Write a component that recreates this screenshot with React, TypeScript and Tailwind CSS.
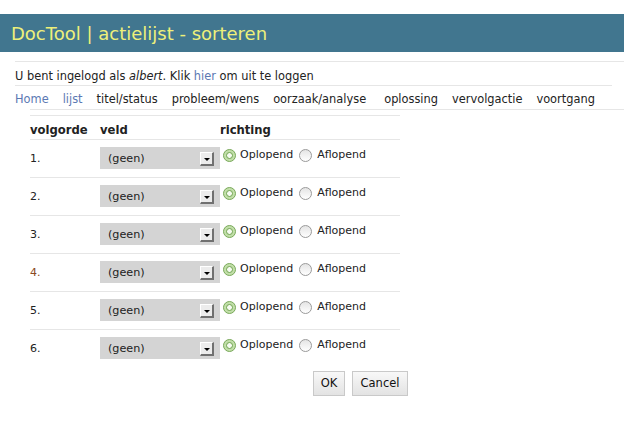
import React from "react";

const rows = [1, 2, 3, 4, 5, 6];

function Radio({ checked }: { checked: boolean }) {
  if (checked) {
    return (
      <span className="flex h-[13px] w-[13px] shrink-0 items-center justify-center rounded-full border border-[#79a95a] bg-[#c2dfa9]">
        <span className="block h-[7px] w-[7px] rounded-full border-[1.5px] border-[#6fa34e] bg-[#f6fbf2]" />
      </span>
    );
  }
  return (
    <span className="block h-[13px] w-[13px] shrink-0 rounded-full border border-[#9a9a9a] bg-gradient-to-b from-[#e4e4e4] to-white" />
  );
}

function FakeSelect() {
  return (
    <div className="relative mt-[7px] flex h-[22px] w-[120px] items-center bg-[#d4d4d4] pl-[8px] pt-[3px] text-[11.2px] text-[#222]">
      (geen)
      <div className="absolute left-[100px] top-[5px] flex h-[14px] w-[14px] items-center justify-center border-b-2 border-r-2 border-b-[#707070] border-r-[#707070] border-l border-t border-l-white border-t-white bg-[#ececec]">
        <span className="mt-[1px] h-0 w-0 border-x-[3px] border-t-[3px] border-x-transparent border-t-black" />
      </div>
    </div>
  );
}

export default function App() {
  return (
    <div className="h-[439px] w-[624px] overflow-hidden bg-white font-['DejaVu_Sans',sans-serif] text-[#222]">
      <div className="h-[14px]" />
      <div className="flex h-[38px] items-center bg-[#41768f] pl-[11px] text-[18px] text-[#eef07a]">
        DocTool | actielijst - sorteren
      </div>
      <div className="ml-[15px] mt-[9px] border-t border-[#e6e6e6]" />
      <div className="ml-[15px] mr-[12px] flex h-[24px] items-center border-b border-[#e6e6e6] pt-[6px] text-[11.4px]">
        <span>
          U bent ingelogd als <i>albert</i>. Klik{" "}
          <span className="text-[#5b79b3]">hier</span> om uit te loggen
        </span>
      </div>
      <div className="ml-[15px] flex h-[23px] items-center gap-[14px] pt-[5px] text-[11.4px]">
        <span className="text-[#5b79b3]">Home</span>
        <span className="text-[#5b79b3]">lijst</span>
        <span>titel/status</span>
        <span>probleem/wens</span>
        <span className="mr-[4px]">oorzaak/analyse</span>
        <span>oplossing</span>
        <span>vervolgactie</span>
        <span>voortgang</span>
      </div>
      <div className="ml-[30px] border-t border-[#e6e6e6]" />
      <div className="ml-[30px] mt-[5px] w-[370px] border-t border-[#e6e6e6]">
        <div className="flex h-[24px] items-center border-b border-[#e6e6e6] pt-[6px] text-[11.6px] font-bold text-[#222]">
          <span className="w-[70px]">volgorde</span>
          <span className="w-[120px]">veld</span>
          <span>richting</span>
        </div>
        {rows.map((n) => (
          <div
            key={n}
            className={`flex h-[38px] items-start text-[11px] ${n < 6 ? "border-b border-[#e6e6e6]" : ""}`}
          >
            <span className={`w-[70px] pt-[11px] ${n === 4 ? "text-[#8a4a22]" : ""}`}>{n}.</span>
            <FakeSelect />
            <div className="ml-[3px] mt-[8px] flex items-center">
              <Radio checked />
              <span className="ml-[4px] mt-[-1px]">Oplopend</span>
              <span className="ml-[6px] block">
                <Radio checked={false} />
              </span>
              <span className="ml-[5px] mt-[-1px]">Aflopend</span>
            </div>
          </div>
        ))}
      </div>
      <div className="mt-[3px] flex w-[408px] justify-end gap-[7px]">
        <button className="h-[25px] w-[32px] border border-[#c9c9c9] bg-gradient-to-b from-[#f8f8f8] to-[#e3e3e3] text-[11.5px] text-[#111]">
          OK
        </button>
        <button className="h-[25px] w-[56px] border border-[#c9c9c9] bg-gradient-to-b from-[#f8f8f8] to-[#e3e3e3] text-[11.5px] text-[#111]">
          Cancel
        </button>
      </div>
    </div>
  );
}
